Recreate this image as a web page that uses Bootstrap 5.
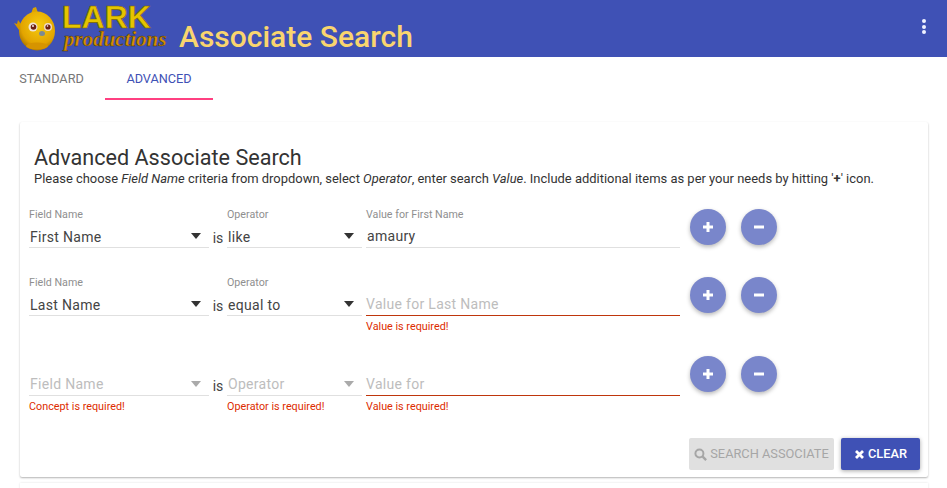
<!DOCTYPE html>
<html lang="en"><head><meta charset="utf-8"><title>Associate Search</title>
<link rel="stylesheet" href="https://cdn.jsdelivr.net/npm/bootstrap@5.3.0/dist/css/bootstrap.min.css">
<style>
html,body{height:488px;overflow:hidden}
body{font-family:Roboto,sans-serif;background:#fff;color:#333}
.topbar{height:57px;background:#3f51b5}
.logo-art{width:170px;height:57px;flex:none}
.app-title{font-size:30px;font-weight:500;color:#f9d56e;margin:8px 0 0 9px;line-height:57px;height:49px}
.kebab{width:4px;margin:19px 21px 0 auto;gap:1.500px}
.kebab span{width:4px;height:4px;border-radius:50%;background:#f0f2ff}
.tabrow{height:43px}
.tabitem{height:43px;width:108px;font-size:12.7px;line-height:43px;text-align:center;color:#777;text-transform:uppercase}
.tabitem.first{width:105px;padding-right:2px}
.tabitem.on{color:#3f51b5;border-bottom:2px solid #ff4081}
.sheet{margin:22px 19px 0 20px;height:355px;border-radius:2px;box-shadow:0 1px 2px rgba(0,0,0,.3);padding:23px 8px 0 9px;border:0}
.sheet-title{font-size:21.600px;font-weight:400;line-height:26px;margin:0 0 0 5px;color:#333}
.sheet-sub{font-size:12.950px;line-height:16px;margin:0 0 0 5px;color:#333;height:30px}
.frow{height:68px;padding-top:4px}
.frow.err{height:80px}
.w-field{width:180px}.w-op{width:135px}.w-val{width:314px}
.w-is{width:18px;font-size:14px;color:#444;padding-top:23px;text-align:center}
.gapfix{margin-right:4px}
.lbl{font-size:10.700px;color:#8f8f8f;height:14px;line-height:14px;display:block;margin:3px 0 -3px}
.ctl{height:22px;border-bottom:1px solid #e0e0e0;font-size:14px;line-height:20px;padding:6px 1px 0;color:#444;display:flex;justify-content:space-between;align-items:center;box-sizing:content-box;letter-spacing:.3px}
.ctl.picked span{padding-top:2px}
.ctl.tx{padding-top:5px;height:23px}
.ctl.ph{color:#bdbdbd}
.ctl.bad{border-bottom-color:#bf360c;padding-left:0}
.caret{width:0;height:0;border-left:5px solid transparent;border-right:5px solid transparent;border-top:6px solid #333;margin-right:7px;flex:none}
.ph .caret{border-top-color:#aaa}
.msg{font-size:10.800px;color:#dd2c00;line-height:14px;padding-top:4px}
.roundbtn{width:36px;height:36px;border-radius:50%;background:#7986cb;border:0;padding:0;box-shadow:0 2px 4px rgba(0,0,0,.28);display:flex;align-items:center;justify-content:center;flex:none}
.roundset{gap:15px;margin-left:10px;padding-top:4px}
.roundset.up{padding-top:3px}
.actbtn{height:32px;border:0;border-radius:2px;font-size:12.800px;font-weight:500;padding:0;display:flex;align-items:center;justify-content:center;gap:3px;text-transform:uppercase}
.act-search{width:145px;background:#e0e0e0;color:#a6a6a6;font-weight:400}
.act-clear{width:79px;background:#3f51b5;color:#fff;box-shadow:0 1px 4px rgba(0,0,0,.35)}
.actions{gap:7px;margin:9px 0 0 0}
.nextsheet{margin:6px 19px 0 20px;height:10px;box-shadow:0 0 2px rgba(0,0,0,.12)}
</style></head><body>
<header class="topbar d-flex align-items-start">
  <svg class="logo-art" viewBox="0 0 170 57" role="img" aria-label="Lark Productions logo">
    <defs><radialGradient id="bodyfill" cx=".55" cy=".35" r=".7"><stop offset="0" stop-color="#f6cc10"/><stop offset=".7" stop-color="#e2a400"/><stop offset="1" stop-color="#9c6a00"/></radialGradient></defs>
    <path d="M19 30 L14 23 L17 24 L18 20 L21 24 L24 28 Z" fill="#d39500"/>
    <path d="M31 14 L33 8 L36 7 L38 13 Z" fill="#dba400"/>
    <ellipse cx="37" cy="31" rx="18" ry="19.500" fill="url(#bodyfill)"/>
    <ellipse cx="37" cy="46" rx="11" ry="3.500" fill="#d69400"/>
    <circle cx="33" cy="27" r="4.500" fill="#f1e4d8"/><circle cx="33.500" cy="27" r="2.800" fill="#6b1f10"/><circle cx="33" cy="26" r=".9" fill="#fff"/>
    <circle cx="48" cy="27" r="4" fill="#f1dcc8"/><circle cx="48" cy="27" r="2.600" fill="#6b1f10"/><circle cx="47.500" cy="26" r=".8" fill="#fff"/>
    <ellipse cx="42" cy="33.500" rx="3" ry="2.500" fill="#7d8a92"/>
    <text x="62" y="28" font-family="Liberation Sans" font-weight="700" font-size="32" fill="#e5c400" stroke="#7a6600" stroke-width=".7">LARK</text>
    <text x="64" y="46" font-family="Liberation Serif" font-style="italic" font-weight="700" font-size="21" fill="#d68f00" stroke="#3b2c10" stroke-width=".4">productions</text>
  </svg>
  <h1 class="app-title">Associate Search</h1>
  <div class="kebab d-flex flex-column" aria-label="Menu"><span></span><span></span><span></span></div>
</header>
<nav class="tabrow d-flex">
  <div class="tabitem first">Standard</div>
  <div class="tabitem on">Advanced</div>
</nav>
<main class="card sheet">
  <h2 class="sheet-title">Advanced Associate Search</h2>
  <p class="sheet-sub">Please choose <em>Field Name</em> criteria from dropdown, select <em>Operator</em>, enter search <em>Value</em>. Include additional items as per your needs by hitting '<b>+</b>' icon.</p>

  <div class="frow d-flex align-items-start">
    <div class="w-field"><label class="lbl">Field Name</label><div class="ctl picked"><span>First Name</span><i class="caret"></i></div></div>
    <div class="w-is">is</div>
    <div class="w-op"><label class="lbl">Operator</label><div class="ctl picked"><span>like</span><i class="caret"></i></div></div>
    <div class="gapfix"></div>
    <div class="w-val"><label class="lbl">Value for First Name</label><div class="ctl tx"><span>amaury</span></div></div>
    <div class="roundset d-flex"><button class="roundbtn" aria-label="Add"><svg width="12" height="12" viewBox="0 0 12 12"><path d="M6 1v10M1 6h10" stroke="#fff" stroke-width="3"/></svg></button><button class="roundbtn" aria-label="Remove"><svg width="12" height="12" viewBox="0 0 12 12"><path d="M1 6h10" stroke="#fff" stroke-width="3"/></svg></button></div>
  </div>

  <div class="frow err d-flex align-items-start">
    <div class="w-field"><label class="lbl">Field Name</label><div class="ctl picked"><span>Last Name</span><i class="caret"></i></div></div>
    <div class="w-is">is</div>
    <div class="w-op"><label class="lbl">Operator</label><div class="ctl picked"><span>equal to</span><i class="caret"></i></div></div>
    <div class="gapfix"></div>
    <div class="w-val"><span class="lbl"></span><div class="ctl tx ph bad"><span>Value for Last Name</span></div><div class="msg">Value is required!</div></div>
    <div class="roundset d-flex"><button class="roundbtn" aria-label="Add"><svg width="12" height="12" viewBox="0 0 12 12"><path d="M6 1v10M1 6h10" stroke="#fff" stroke-width="3"/></svg></button><button class="roundbtn" aria-label="Remove"><svg width="12" height="12" viewBox="0 0 12 12"><path d="M1 6h10" stroke="#fff" stroke-width="3"/></svg></button></div>
  </div>

  <div class="frow err d-flex align-items-start">
    <div class="w-field"><span class="lbl"></span><div class="ctl ph"><span>Field Name</span><i class="caret"></i></div><div class="msg">Concept is required!</div></div>
    <div class="w-is">is</div>
    <div class="w-op"><span class="lbl"></span><div class="ctl ph"><span>Operator</span><i class="caret"></i></div><div class="msg">Operator is required!</div></div>
    <div class="gapfix"></div>
    <div class="w-val"><span class="lbl"></span><div class="ctl tx ph bad"><span>Value for</span></div><div class="msg">Value is required!</div></div>
    <div class="roundset up d-flex"><button class="roundbtn" aria-label="Add"><svg width="12" height="12" viewBox="0 0 12 12"><path d="M6 1v10M1 6h10" stroke="#fff" stroke-width="3"/></svg></button><button class="roundbtn" aria-label="Remove"><svg width="12" height="12" viewBox="0 0 12 12"><path d="M1 6h10" stroke="#fff" stroke-width="3"/></svg></button></div>
  </div>

  <div class="actions d-flex justify-content-end">
    <button class="actbtn act-search" disabled><svg width="13" height="13" viewBox="0 0 12 12"><circle cx="5" cy="5" r="3.700" fill="none" stroke="#a6a6a6" stroke-width="1.800"/><path d="M8 8l3.200 3.200" stroke="#a6a6a6" stroke-width="2.200"/></svg>Search Associate</button>
    <button class="actbtn act-clear"><svg width="11" height="11" viewBox="0 0 11 11"><path d="M2 2l7 7M9 2l-7 7" stroke="#fff" stroke-width="2.800"/></svg>Clear</button>
  </div>
</main>
<div class="nextsheet"></div>
</body></html>
